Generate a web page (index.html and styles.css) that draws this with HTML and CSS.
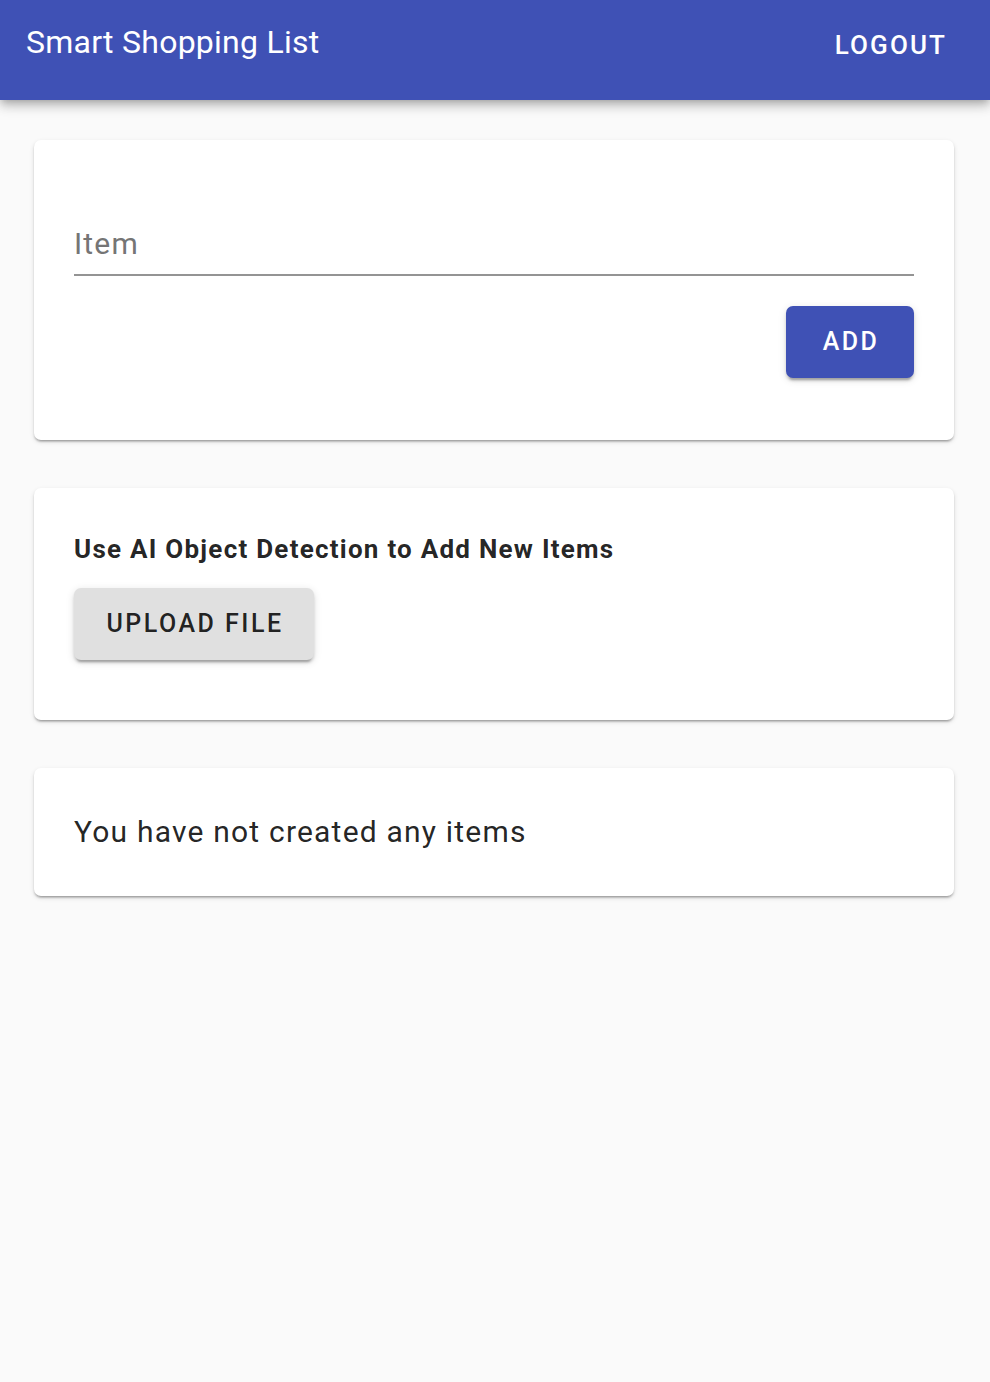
FILE: index.html
```html
<!DOCTYPE html>
<html lang="en">
<head>
<meta charset="utf-8">
<title>Smart Shopping List</title>
<link rel="stylesheet" href="styles.css">
</head>
<body>
  <header class="appbar">
    <div class="toolbar">
      <h1 class="title">Smart Shopping List</h1>
      <button class="btn-text" type="button">Logout</button>
    </div>
  </header>
  <main class="content">
    <section class="card card-form">
      <div class="field">
        <input class="field-input" type="text" placeholder="Item" aria-label="Item">
      </div>
      <div class="actions">
        <button class="btn btn-primary" type="button">Add</button>
      </div>
    </section>
    <section class="card card-upload">
      <h2 class="card-heading">Use AI Object Detection to Add New Items</h2>
      <button class="btn btn-default" type="button">Upload File</button>
    </section>
    <section class="card card-empty">
      <p class="empty-text">You have not created any items</p>
    </section>
  </main>
</body>
</html>
```

FILE: styles.css
```css
* { box-sizing: border-box; }

html, body {
  margin: 0;
  padding: 0;
}

body {
  background: #fafafa;
  font-family: Roboto, "Noto Sans", "Liberation Sans", sans-serif;
  color: rgba(0, 0, 0, 0.87);
  min-height: 1382px;
}

.appbar {
  height: 100px;
  background: #3f51b5;
  color: #fff;
  box-shadow: 0 3px 7px -2px rgba(0,0,0,0.2), 0 7px 9px 0 rgba(0,0,0,0.14), 0 2px 17px 0 rgba(0,0,0,0.12);
  position: relative;
  z-index: 2;
}

.toolbar {
  height: 84px;
  display: flex;
  align-items: center;
  justify-content: space-between;
  padding: 0 31px 0 26px;
}

.title {
  margin: 0;
  font-size: 32px;
  font-weight: 400;
  line-height: 36px;
  letter-spacing: 0.25px;
}

.btn-text {
  border: 0;
  background: transparent;
  color: #fff;
  font-family: inherit;
  font-size: 26px;
  font-weight: 500;
  text-transform: uppercase;
  letter-spacing: 2.1px;
  padding: 0 12px 0 14px;
  height: 40px;
  margin-top: 6px;
  line-height: 40px;
  cursor: pointer;
}

.content {
  padding: 40px 36px 0 34px;
  display: flex;
  flex-direction: column;
  gap: 48px;
}

.card {
  background: #fff;
  border-radius: 7px;
  box-shadow: 0 3px 2px -2px rgba(0,0,0,0.2), 0 2px 2px 0 rgba(0,0,0,0.14), 0 2px 5px 0 rgba(0,0,0,0.12);
}

.card-form {
  padding: 40px 40px 62px;
}

.field {
  padding-top: 46px;
  padding-bottom: 13px;
  border-bottom: 2px solid #949494;
}

.field-input {
  display: block;
  width: 100%;
  height: 35px;
  border: 0;
  outline: none;
  padding: 0;
  margin: 0;
  font-family: inherit;
  font-size: 30px;
  line-height: 35px;
  letter-spacing: 1.2px;
  color: rgba(0,0,0,0.87);
  background: transparent;
}

.field-input::placeholder {
  color: #757575;
  opacity: 1;
}

.actions {
  display: flex;
  justify-content: flex-end;
  margin-top: 30px;
}

.btn {
  height: 72px;
  border: 0;
  border-radius: 7px;
  font-family: inherit;
  font-size: 25px;
  font-weight: 500;
  letter-spacing: 2.5px;
  text-transform: uppercase;
  line-height: 72px;
  padding: 0;
  cursor: pointer;
  box-shadow: 0 5px 2px -3px rgba(0,0,0,0.2), 0 3px 3px 0 rgba(0,0,0,0.14), 0 2px 9px 0 rgba(0,0,0,0.12);
}

.btn-primary {
  width: 128px;
  background: #3f51b5;
  color: #fff;
  text-indent: 2px;
}

.btn-default {
  width: 240px;
  background: #e0e0e0;
  color: rgba(0,0,0,0.87);
  display: block;
  text-indent: 2px;
}

.card-upload {
  padding: 40px 40px 60px;
}

.card-heading {
  margin: 6px 0 24px;
  font-size: 26px;
  font-weight: 700;
  line-height: 30px;
  letter-spacing: 1.25px;
}

.card-empty {
  padding: 46px 40px 47px;
}

.empty-text {
  margin: 0;
  font-size: 30px;
  line-height: 35px;
  font-weight: 400;
  letter-spacing: 1.2px;
}
```
